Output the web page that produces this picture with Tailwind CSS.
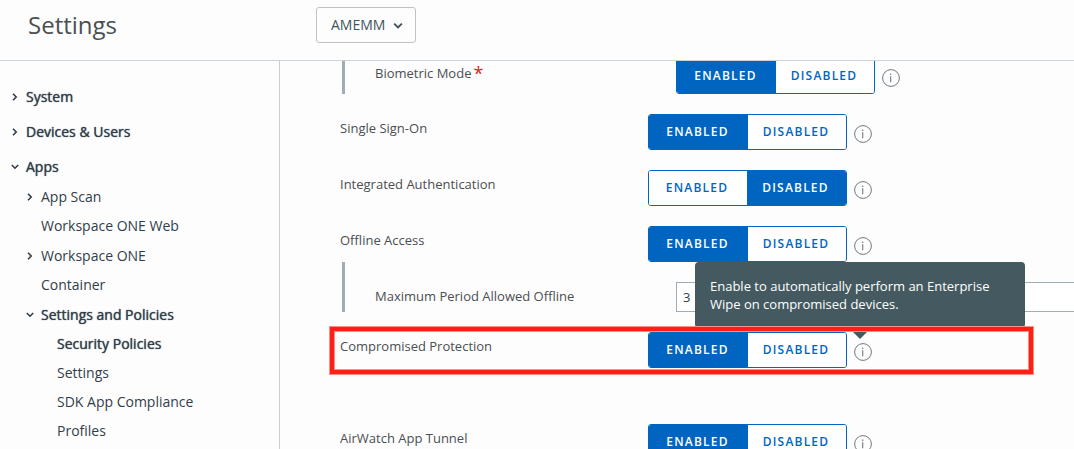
<!DOCTYPE html>
<html lang="en">
<head>
  <meta charset="UTF-8"/>
  <meta name="viewport" content="width=device-width, initial-scale=1.0"/>
  <title>Settings – Security Policies</title>
  <script src="https://cdn.jsdelivr.net/npm/@tailwindcss/browser@4"></script>
</head>
<body class="h-screen flex flex-col overflow-hidden bg-[#fdfdfd] font-['Open_Sans','Noto_Sans',sans-serif] text-[13px] text-[#4b4f52]">

  <!-- shared icons -->
  <svg class="hidden">
    <symbol id="chevron" viewBox="0 0 10 10"><path d="M3 1.8 6.2 5 3 8.2" fill="none" stroke="currentColor" stroke-width="1.6"/></symbol>
    <symbol id="chevron-down" viewBox="0 0 10 10"><path d="M1.8 3 5 6.2 8.2 3" fill="none" stroke="currentColor" stroke-width="1.6"/></symbol>
    <symbol id="info" viewBox="0 0 18 18">
      <circle cx="9" cy="9" r="8.4" fill="none" stroke="currentColor" stroke-width="1"/>
      <path d="M8.7 7.3v6M8.7 4.6v1.4" fill="none" stroke="currentColor" stroke-width="1.1"/>
    </symbol>
  </svg>

  <!-- Header -->
  <header class="flex items-start shrink-0 h-[61px] border-b border-[#ccd3da]">
    <h1 class="w-[316px] pl-7 pt-[7px] text-2xl leading-9 text-[#4b4f52]">Settings</h1>
    <div class="relative mt-[7px]">
      <select aria-label="Organization group"
              class="block appearance-none w-[100px] h-9 pl-3.5 pr-6 border border-[#c0c3c6] rounded-[3px] text-sm text-[#3f545c]">
        <option>AMEMM</option>
      </select>
      <svg class="absolute right-3 top-[13px] size-3 text-[#3f545c] pointer-events-none"><use href="#chevron-down"/></svg>
    </div>
  </header>

  <div class="flex flex-1 min-h-0">
    <!-- Sidebar -->
    <nav class="w-[280px] shrink-0 border-r border-[#ccced0] pl-[10px] pt-[21px] text-sm text-[#323d4a]">
      <ul class="flex flex-col gap-[5px]">
        <li><a href="#" class="flex items-center h-[30px] gap-[6px] [text-shadow:0_0_1px_currentColor]"><svg class="size-[10px]"><use href="#chevron"/></svg>System</a></li>
        <li><a href="#" class="flex items-center h-[30px] gap-[6px] [text-shadow:0_0_1px_currentColor]"><svg class="size-[10px]"><use href="#chevron"/></svg>Devices &amp; Users</a></li>
        <li>
          <a href="#" class="flex items-center h-[30px] gap-[6px] [text-shadow:0_0_1px_currentColor]"><svg class="size-[10px]"><use href="#chevron-down"/></svg>Apps</a>
          <ul class="pl-[15px]">
            <li><a href="#" class="flex items-center h-[30px] gap-[6px]"><svg class="size-[10px]"><use href="#chevron"/></svg>App Scan</a></li>
            <li><a href="#" class="flex items-center h-7 mb-px pl-4">Workspace ONE Web</a></li>
            <li><a href="#" class="flex items-center h-[30px] gap-[6px]"><svg class="size-[10px]"><use href="#chevron"/></svg>Workspace ONE</a></li>
            <li><a href="#" class="flex items-center h-7 mb-px pl-4">Container</a></li>
            <li>
              <a href="#" class="flex items-center h-[30px] gap-[6px] [text-shadow:0_0_1px_currentColor]"><svg class="size-[10px]"><use href="#chevron-down"/></svg>Settings and Policies</a>
              <ul class="pl-8">
                <li><a href="#" class="flex items-center h-7 mb-px [text-shadow:0_0_1px_currentColor]">Security Policies</a></li>
                <li><a href="#" class="flex items-center h-7 mb-px">Settings</a></li>
                <li><a href="#" class="flex items-center h-7 mb-px">SDK App Compliance</a></li>
                <li><a href="#" class="flex items-center h-7 mb-px">Profiles</a></li>
              </ul>
            </li>
          </ul>
        </li>
      </ul>
    </nav>

    <!-- Policy form -->
    <main class="flex-1 min-w-0 overflow-hidden pl-[60px]">
      <!-- scrolled up slightly, so the first row runs under the header -->
      <div class="-mt-[3px] flex flex-col gap-5">

        <div class="flex items-start ml-[2px] pl-[30px] border-l-3 border-[#9fadb5]">
          <span id="l-bio" class="flex w-[301px] pt-[5px] gap-[2px] leading-5">Biometric Mode <span class="text-lg leading-5 text-[#d9271c]">*</span></span>
          <div role="group" aria-labelledby="l-bio" class="flex h-9 border border-[#0065c1] rounded-[3px] overflow-hidden text-xs font-semibold tracking-widest *:pr-0.5">
            <button type="button" aria-pressed="true" class="w-[99px] bg-[#0065c1] text-white">ENABLED</button>
            <button type="button" aria-pressed="false" class="w-[98px] bg-white text-[#0065c1]">DISABLED</button>
          </div>
          <button type="button" aria-label="More information" class="ml-[7px] mt-[11px] text-[#6f7a80]"><svg class="block size-[18px]"><use href="#info"/></svg></button>
        </div>

        <div class="flex items-start">
          <span id="l-sso" class="w-[308px] leading-7">Single Sign-On</span>
          <div role="group" aria-labelledby="l-sso" class="flex h-9 border border-[#0065c1] rounded-[3px] overflow-hidden text-xs font-semibold tracking-widest *:pr-0.5">
            <button type="button" aria-pressed="true" class="w-[99px] bg-[#0065c1] text-white">ENABLED</button>
            <button type="button" aria-pressed="false" class="w-[98px] bg-white text-[#0065c1]">DISABLED</button>
          </div>
          <button type="button" aria-label="More information" class="ml-[7px] mt-[11px] text-[#6f7a80]"><svg class="block size-[18px]"><use href="#info"/></svg></button>
        </div>

        <div class="flex items-start">
          <span id="l-auth" class="w-[308px] leading-7">Integrated Authentication</span>
          <div role="group" aria-labelledby="l-auth" class="flex h-9 border border-[#0065c1] rounded-[3px] overflow-hidden text-xs font-semibold tracking-widest *:pr-0.5">
            <button type="button" aria-pressed="false" class="w-[98px] bg-white text-[#0065c1]">ENABLED</button>
            <button type="button" aria-pressed="true" class="w-[99px] bg-[#0065c1] text-white">DISABLED</button>
          </div>
          <button type="button" aria-label="More information" class="ml-[7px] mt-[11px] text-[#6f7a80]"><svg class="block size-[18px]"><use href="#info"/></svg></button>
        </div>

        <div>
          <div class="flex items-start">
            <span id="l-offline" class="w-[308px] leading-7">Offline Access</span>
            <div role="group" aria-labelledby="l-offline" class="flex h-9 border border-[#0065c1] rounded-[3px] overflow-hidden text-xs font-semibold tracking-widest *:pr-0.5">
              <button type="button" aria-pressed="true" class="w-[99px] bg-[#0065c1] text-white">ENABLED</button>
              <button type="button" aria-pressed="false" class="w-[98px] bg-white text-[#0065c1]">DISABLED</button>
            </div>
            <button type="button" aria-label="More information" class="ml-[7px] mt-[11px] text-[#6f7a80]"><svg class="block size-[18px]"><use href="#info"/></svg></button>
          </div>
          <div class="flex items-start ml-[2px] pl-[30px] pt-5 border-l-3 border-[#9fadb5]">
            <label for="max-offline" class="w-[301px] shrink-0 leading-7">Maximum Period Allowed Offline</label>
            <input id="max-offline" type="text" value="3" class="flex-1 min-w-0 h-[30px] -mr-px px-1.5 border border-[#9fadb5] bg-white text-[#323d4a]"/>
          </div>
        </div>

        <div class="relative flex items-start">
          <span id="l-comp" class="w-[308px] leading-7">Compromised Protection</span>
          <div role="group" aria-labelledby="l-comp" class="flex h-9 border border-[#0065c1] rounded-[3px] overflow-hidden text-xs font-semibold tracking-widest *:pr-0.5">
            <button type="button" aria-pressed="true" class="w-[99px] bg-[#0065c1] text-white">ENABLED</button>
            <button type="button" aria-pressed="false" class="w-[98px] bg-white text-[#0065c1]">DISABLED</button>
          </div>
          <div class="relative ml-[7px] mt-[11px]">
            <button type="button" aria-label="More information" aria-describedby="tip" class="block text-[#6f7a80]"><svg class="block size-[18px]"><use href="#info"/></svg></button>
            <!-- tooltip -->
            <div id="tip" role="tooltip" class="absolute z-10 bottom-[33px] -left-[159px] w-[330px] p-[15px] rounded-[4px] bg-[#445a60] text-white leading-[18px]">
              Enable to automatically perform an Enterprise Wipe on compromised devices.
              <svg class="absolute left-[154px] top-full w-[22px] h-[11px]" viewBox="0 0 22 11"><path d="M0 0h22L11 11z" fill="#445a60"/></svg>
            </div>
          </div>
          <!-- highlight frame -->
          <div class="absolute z-20 -left-[10px] right-[41px] -top-[5px] -bottom-[6px] border-4 border-[#ff1f17] shadow-[0_0_0_1px_#ff8f86,inset_0_0_0_1px_#ff8f86] pointer-events-none"></div>
        </div>

        <div class="flex items-start pt-9">
          <span id="l-tunnel" class="w-[308px] leading-7">AirWatch App Tunnel</span>
          <div role="group" aria-labelledby="l-tunnel" class="flex h-9 border border-[#0065c1] rounded-[3px] overflow-hidden text-xs font-semibold tracking-widest *:pr-0.5">
            <button type="button" aria-pressed="true" class="w-[99px] bg-[#0065c1] text-white">ENABLED</button>
            <button type="button" aria-pressed="false" class="w-[98px] bg-white text-[#0065c1]">DISABLED</button>
          </div>
          <button type="button" aria-label="More information" class="ml-[7px] mt-[11px] text-[#6f7a80]"><svg class="block size-[18px]"><use href="#info"/></svg></button>
        </div>

      </div>
    </main>
  </div>
</body>
</html>
